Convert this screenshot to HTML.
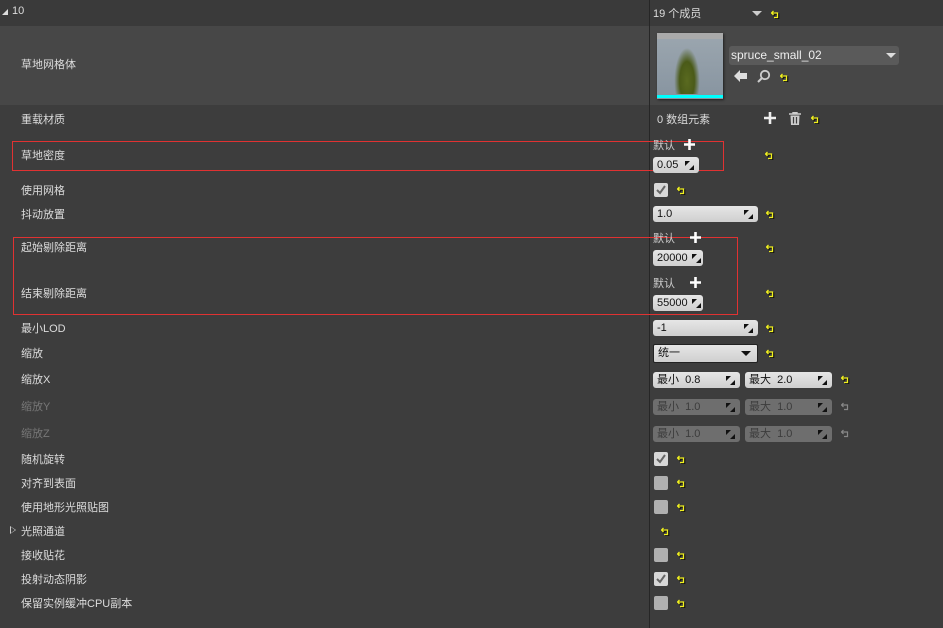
<!DOCTYPE html>
<html><head><meta charset="utf-8"><style>
*{margin:0;padding:0;box-sizing:border-box}
body{width:943px;height:628px;background:#3d3d3d;font-family:"Liberation Sans","Noto Sans CJK SC",sans-serif;font-size:11px;color:#dcdcdc;position:relative;overflow:hidden}
.a{position:absolute;white-space:nowrap}
.t{margin-top:-2px}
.lbl{left:21px;margin-top:-2px}
.dim{color:#777}
.fld{position:absolute;height:16px;background:linear-gradient(#e6e6e6,#cfcfcf);border-radius:3px;color:#111;font-size:11px;line-height:16px;padding-left:4px}
.fld.d{background:#6e6e6e;color:#3c3c3c}
.fld .k{position:absolute;right:5px;top:4px;width:9px;height:9px}
.cb{position:absolute;width:14px;height:14px;border-radius:2px;background:#b0b0b0}
.cb.on{background:#d8d8d8}
.rs{position:absolute;width:9px;height:9px}
.red{position:absolute;border:1px solid #e03232}
</style></head><body>
<svg width="0" height="0" style="position:absolute"><defs>
<symbol id="r" viewBox="0 0 9 9"><path d="M2.5 1 L0.5 3 L2.5 5 M0.5 3 H6.5 V7.5 H3" fill="none" stroke="#111" stroke-width="1.6" transform="translate(1,1)"/><path d="M2.5 1 L0.5 3 L2.5 5 M0.5 3 H6.5 V7.5 H3" fill="none" stroke="#f0f020" stroke-width="1.3"/></symbol>
<symbol id="rg" viewBox="0 0 9 9"><path d="M2.5 1 L0.5 3 L2.5 5 M0.5 3 H6.5 V7.5 H3" fill="none" stroke="#888" stroke-width="1.2"/></symbol>
<symbol id="k" viewBox="0 0 9 9"><path d="M0 0H5L0 5Z M9 9H4L9 4Z" fill="#111"/></symbol>
</defs></svg>

<div class="a" style="left:0;top:0;width:943px;height:26px;background:#3a3a3a"></div>
<div class="a" style="left:0;top:26px;width:943px;height:79px;background:#474747"></div>
<div class="a" style="left:649px;top:0;width:1px;height:628px;background:#262626"></div>

<div class="a" style="left:2px;top:9px;width:0;height:0;border-left:6px solid transparent;border-bottom:6px solid #ddd"></div>
<div class="a t" style="left:12px;top:7px">10</div>
<div class="a t" style="left:653px;top:7px">19 个成员</div>
<div class="a" style="left:752px;top:11px;border-left:5px solid transparent;border-right:5px solid transparent;border-top:5px solid #ccc"></div>
<svg class="rs" style="left:771px;top:10px"><use href="#r"/></svg>

<div class="a lbl" style="top:58px">草地网格体</div>
<div class="a" style="left:657px;top:33px;width:66px;height:66px;background:linear-gradient(#aaa 0 9%,#9aa5ae 9%,#8794a0 100%);box-shadow:1px 1px 2px #222"></div>
<div class="a" style="left:672px;top:42px;width:30px;height:52px;background:radial-gradient(ellipse at 50% 75%,#5a6a20 0,#4a5a18 35%,transparent 60%)"></div>
<div class="a" style="left:657px;top:95px;width:66px;height:3px;background:#0ff"></div>
<div class="a" style="left:729px;top:46px;width:170px;height:19px;background:#5a5a5a;border-radius:3px;color:#eee;line-height:19px;padding-left:2px;font-size:12px">spruce_small_02</div>
<div class="a" style="left:886px;top:53px;border-left:5px solid transparent;border-right:5px solid transparent;border-top:5px solid #ddd"></div>
<svg class="a" style="left:734px;top:70px" width="14" height="12"><path d="M0 6 L6 0 V3 H13 V9 H6 V12 Z" fill="#ddd"/></svg>
<svg class="a" style="left:757px;top:69px" width="14" height="14"><circle cx="8" cy="6" r="4.2" fill="none" stroke="#ccc" stroke-width="1.8"/><path d="M5 9 L1 13" stroke="#ccc" stroke-width="2"/></svg>
<svg class="rs" style="left:780px;top:73px"><use href="#r"/></svg>

<div class="a lbl" style="top:113px">重载材质</div>
<div class="a t" style="left:657px;top:113px">0 数组元素</div>
<svg class="a" style="left:764px;top:112px" width="12" height="12"><path d="M6 0V12M0 6H12" stroke="#eee" stroke-width="2.6"/></svg>
<svg class="a" style="left:788px;top:112px" width="14" height="14"><path d="M1 2H13M5 2V0.5H9V2" stroke="#ccc" stroke-width="1.4" fill="none"/><path d="M2.5 3.5H11.5L11 13H3Z" fill="#ccc"/><path d="M5.5 5V11.5M8.5 5V11.5" stroke="#3d3d3d" stroke-width="1.2"/></svg>
<svg class="rs" style="left:811px;top:115px"><use href="#r"/></svg>

<div class="red" style="left:12px;top:141px;width:712px;height:30px"></div>
<div class="a lbl" style="top:149px">草地密度</div>
<div class="a t" style="left:653px;top:139px;color:#ccc">默认</div>
<svg class="a" style="left:684px;top:139px" width="11" height="11"><path d="M5.5 0V11M0 5.5H11" stroke="#fff" stroke-width="2.6"/></svg>
<div class="fld" style="left:653px;top:157px;width:46px">0.05<svg class="k"><use href="#k"/></svg></div>
<svg class="rs" style="left:765px;top:151px"><use href="#r"/></svg>

<div class="a lbl" style="top:184px">使用网格</div>
<div class="cb on" style="left:654px;top:183px"></div><svg class="a" style="left:656px;top:185px" width="10" height="10"><path d="M1 5 L4 8 L9 1" stroke="#666" stroke-width="2" fill="none"/></svg>
<svg class="rs" style="left:677px;top:186px"><use href="#r"/></svg>

<div class="a lbl" style="top:208px">抖动放置</div>
<div class="fld" style="left:653px;top:206px;width:105px">1.0<svg class="k"><use href="#k"/></svg></div>
<svg class="rs" style="left:766px;top:210px"><use href="#r"/></svg>

<div class="red" style="left:13px;top:237px;width:725px;height:78px"></div>
<div class="a lbl" style="top:241px">起始剔除距离</div>
<div class="a t" style="left:653px;top:232px;color:#ccc">默认</div>
<svg class="a" style="left:690px;top:232px" width="11" height="11"><path d="M5.5 0V11M0 5.5H11" stroke="#fff" stroke-width="2.6"/></svg>
<div class="fld" style="left:653px;top:250px;width:50px">20000<svg class="k" style="right:2px"><use href="#k"/></svg></div>
<svg class="rs" style="left:766px;top:244px"><use href="#r"/></svg>
<div class="a lbl" style="top:287px">结束剔除距离</div>
<div class="a t" style="left:653px;top:277px;color:#ccc">默认</div>
<svg class="a" style="left:690px;top:277px" width="11" height="11"><path d="M5.5 0V11M0 5.5H11" stroke="#fff" stroke-width="2.6"/></svg>
<div class="fld" style="left:653px;top:295px;width:50px">55000<svg class="k" style="right:2px"><use href="#k"/></svg></div>
<svg class="rs" style="left:766px;top:289px"><use href="#r"/></svg>

<div class="a lbl" style="top:322px">最小LOD</div>
<div class="fld" style="left:653px;top:320px;width:105px">-1<svg class="k"><use href="#k"/></svg></div>
<svg class="rs" style="left:766px;top:324px"><use href="#r"/></svg>

<div class="a lbl" style="top:347px">缩放</div>
<div class="fld" style="left:653px;top:344px;width:105px;height:19px;line-height:17px;border:1px solid #222;border-radius:2px">统一</div>
<div class="a" style="left:741px;top:351px;border-left:5px solid transparent;border-right:5px solid transparent;border-top:5px solid #111"></div>
<svg class="rs" style="left:766px;top:349px"><use href="#r"/></svg>

<div class="a lbl" style="top:373px">缩放X</div>
<div class="fld" style="left:653px;top:372px;width:87px">最小&nbsp;&nbsp;0.8<svg class="k"><use href="#k"/></svg></div>
<div class="fld" style="left:745px;top:372px;width:87px">最大&nbsp;&nbsp;2.0<svg class="k"><use href="#k"/></svg></div>
<svg class="rs" style="left:841px;top:375px"><use href="#r"/></svg>

<div class="a lbl dim" style="top:400px">缩放Y</div>
<div class="fld d" style="left:653px;top:399px;width:87px">最小&nbsp;&nbsp;1.0<svg class="k"><use href="#k"/></svg></div>
<div class="fld d" style="left:745px;top:399px;width:87px">最大&nbsp;&nbsp;1.0<svg class="k"><use href="#k"/></svg></div>
<svg class="rs" style="left:841px;top:402px"><use href="#rg"/></svg>

<div class="a lbl dim" style="top:427px">缩放Z</div>
<div class="fld d" style="left:653px;top:426px;width:87px">最小&nbsp;&nbsp;1.0<svg class="k"><use href="#k"/></svg></div>
<div class="fld d" style="left:745px;top:426px;width:87px">最大&nbsp;&nbsp;1.0<svg class="k"><use href="#k"/></svg></div>
<svg class="rs" style="left:841px;top:429px"><use href="#rg"/></svg>

<div class="a lbl" style="top:453px">随机旋转</div>
<div class="cb on" style="left:654px;top:452px"></div><svg class="a" style="left:656px;top:454px" width="10" height="10"><path d="M1 5 L4 8 L9 1" stroke="#666" stroke-width="2" fill="none"/></svg>
<svg class="rs" style="left:677px;top:455px"><use href="#r"/></svg>

<div class="a lbl" style="top:477px">对齐到表面</div>
<div class="cb" style="left:654px;top:476px"></div>
<svg class="rs" style="left:677px;top:479px"><use href="#r"/></svg>

<div class="a lbl" style="top:501px">使用地形光照贴图</div>
<div class="cb" style="left:654px;top:500px"></div>
<svg class="rs" style="left:677px;top:503px"><use href="#r"/></svg>

<div class="a" style="left:10px;top:526px;border-top:4px solid transparent;border-bottom:4px solid transparent;border-left:6px solid #ccc"></div>
<div class="a" style="left:11px;top:527px;border-top:3px solid transparent;border-bottom:3px solid transparent;border-left:4px solid #3d3d3d"></div>
<div class="a lbl" style="top:525px">光照通道</div>
<svg class="rs" style="left:661px;top:527px"><use href="#r"/></svg>

<div class="a lbl" style="top:549px">接收贴花</div>
<div class="cb" style="left:654px;top:548px"></div>
<svg class="rs" style="left:677px;top:551px"><use href="#r"/></svg>

<div class="a lbl" style="top:573px">投射动态阴影</div>
<div class="cb on" style="left:654px;top:572px"></div><svg class="a" style="left:656px;top:574px" width="10" height="10"><path d="M1 5 L4 8 L9 1" stroke="#666" stroke-width="2" fill="none"/></svg>
<svg class="rs" style="left:677px;top:575px"><use href="#r"/></svg>

<div class="a lbl" style="top:597px">保留实例缓冲CPU副本</div>
<div class="cb" style="left:654px;top:596px"></div>
<svg class="rs" style="left:677px;top:599px"><use href="#r"/></svg>
</body></html>
